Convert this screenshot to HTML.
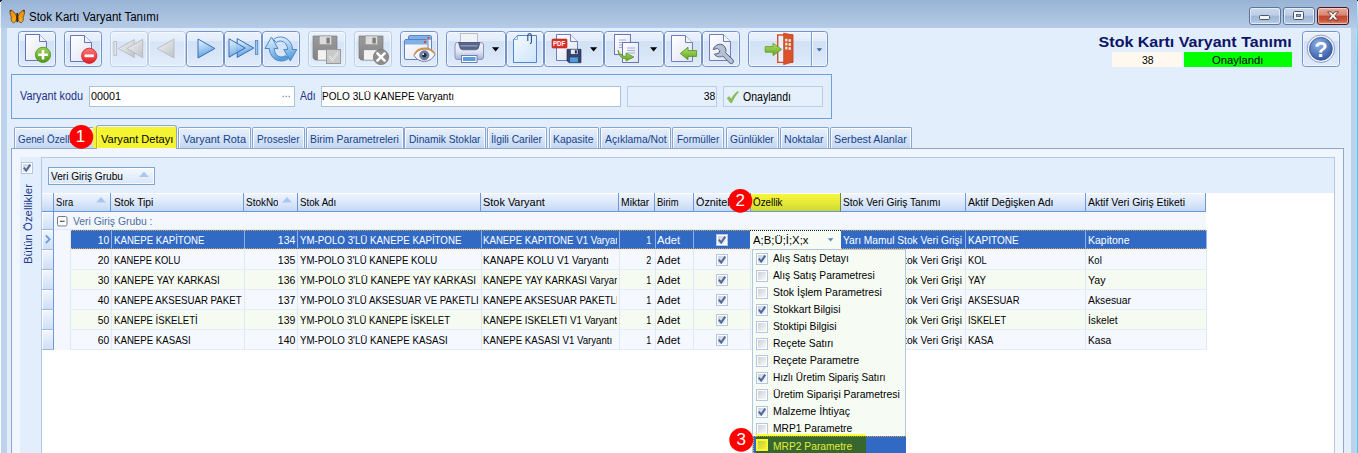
<!DOCTYPE html>
<html><head><meta charset="utf-8"><title>Stok Kartı Varyant Tanımı</title>
<style>
html,body{margin:0;padding:0}
body{width:1358px;height:453px;overflow:hidden;position:relative;background:#e3eefd;font-family:"Liberation Sans", sans-serif;font-size:11px}
div,svg{box-sizing:border-box}

.tb{position:absolute;top:31px;height:36px;border:1px solid #7494c9;border-radius:3.5px;background:linear-gradient(#eaf2fd 0,#e3edfb 26%,#d2e1f5 28%,#d6e4f7 60%,#e0ebfb 100%);box-shadow:inset 0 0 0 1px rgba(255,255,255,.55)}
.tb.dis{border-color:#bccde8;background:linear-gradient(#e9f1fd 0,#e2edfb 27%,#d6e4f7 29%,#dbe7f9 60%,#e2edfb 100%)}
.tab{position:absolute;top:127px;height:21px;border:1px solid #8ba3cf;border-bottom:none;border-radius:2px 2px 0 0;background:linear-gradient(#e6effb 0,#d9e6f8 45%,#c2d6f1 100%);box-shadow:inset 1px 1px 0 rgba(255,255,255,.8),inset -1px 0 0 rgba(255,255,255,.8)}
.hd{position:absolute;top:193px;height:19px;background:linear-gradient(#f0f5fd 0,#dde9fa 50%,#c3d8f5 100%);border-right:1px solid #6f98d8;border-bottom:1px solid #6c97d7;box-shadow:inset 0 1px 0 rgba(255,255,255,.9)}
.ind{position:absolute;left:42px;width:12px;background:linear-gradient(#f1f6fe,#cfdff5);border-right:1px solid #6f98d8;border-bottom:1px solid #9fb8de;box-shadow:inset 1px 1px 0 rgba(255,255,255,.9)}
.cb{position:absolute;width:12px;height:12px;border:1px solid #b5c6e2;background:linear-gradient(135deg,#c6cbd4,#f6f6f6 85%);box-shadow:inset 0 0 0 1px #fff}

</style></head><body>
<div style="position:absolute;left:0px;top:0px;width:1358px;height:28px;background:linear-gradient(#98b3d6,#b6cbe7)"></div>
<div style="position:absolute;left:0px;top:28px;width:7px;height:425px;background:linear-gradient(90deg,#fff 0,#fff 1px,#b7ceea 1px,#bdd3ec 2px,#bdd3ec 6px,#b7ceea 7px)"></div>
<div style="position:absolute;left:1351px;top:28px;width:7px;height:425px;background:linear-gradient(90deg,#bcd2ec 0,#bcd2ec 5px,#c3d3ec 5px,#c3d3ec 6px,#38cdf5 6px,#38cdf5 7px)"></div>
<div style="position:absolute;left:0px;top:2px;width:1px;height:26px;background:#e8eef6"></div>
<div style="position:absolute;left:1357px;top:0px;width:1px;height:60px;background:linear-gradient(#c0f4ff,#80dcf5 40%,#38cdf5)"></div>
<div style="position:absolute;left:1357px;top:0px;width:1px;height:1px;background:#123"></div>
<div style="position:absolute;left:0px;top:0px;width:2px;height:1px;background:#222"></div>
<div style="position:absolute;left:0px;top:1px;width:1px;height:1px;background:#222"></div>
<svg style="position:absolute;left:8.5px;top:8.5px" width="16.5" height="15.6" viewBox="0 0 18 17">
<defs><linearGradient id="bf" x1="0" y1="0" x2="0" y2="1"><stop offset="0" stop-color="#e98506"/><stop offset="1" stop-color="#fdb515"/></linearGradient></defs>
<path d="M8.3 8 C6.5 3.8 3.6 1.2 1.2 1.2 C0.7 4 1.4 7 2.7 8.7 C1.8 10.6 2.4 13.8 4.7 15 C6.8 14.8 8 12.6 8.3 10.6Z" fill="url(#bf)" stroke="#5a3212" stroke-width=".8"/>
<path d="M9.7 8 C11.5 3.8 14.4 1.2 16.8 1.2 C17.3 4 16.6 7 15.3 8.7 C16.2 10.6 15.6 13.8 13.3 15 C11.2 14.8 10 12.6 9.7 10.6Z" fill="url(#bf)" stroke="#5a3212" stroke-width=".8"/>
<path d="M1.2 1.2 L3 2 L1.6 3.4Z M16.8 1.2 L15 2 L16.4 3.4Z" fill="#4a2a12"/>
<path d="M9 5.2 L9 13.4" stroke="#3f2410" stroke-width="2" stroke-linecap="round"/>
</svg>
<div style="position:absolute;top:11px;line-height:1;white-space:pre;font-size:12px;color:#000;left:28.5px;transform-origin:0 0;transform:scaleX(0.9585);">Stok Kartı Varyant Tanımı</div>
<div style="position:absolute;left:1249px;top:7px;width:32px;height:18px;border:1px solid #5f7596;border-radius:3px;background:linear-gradient(#c9d9ee 0,#bccfe8 45%,#9fb8d8 50%,#a9c0de 80%,#c3d5ec 100%);box-shadow:inset 0 0 0 1px rgba(255,255,255,.55)"></div>
<div style="position:absolute;left:1283px;top:7px;width:32px;height:18px;border:1px solid #5f7596;border-radius:3px;background:linear-gradient(#c9d9ee 0,#bccfe8 45%,#9fb8d8 50%,#a9c0de 80%,#c3d5ec 100%);box-shadow:inset 0 0 0 1px rgba(255,255,255,.55)"></div>
<div style="position:absolute;left:1317px;top:7px;width:32px;height:18px;border:1px solid #4c1522;border-radius:3px;background:linear-gradient(#e9a99c 0,#d98674 45%,#c4452c 50%,#c85a3e 80%,#de9078 100%);box-shadow:inset 0 0 0 1px rgba(255,255,255,.45)"></div>
<svg style="position:absolute;left:1259px;top:15px" width="12" height="6" viewBox="0 0 12 6"><rect x=".5" y=".5" width="10" height="4" rx="1" fill="#f4f4f4" stroke="#4a5568" stroke-width="1"/></svg>
<svg style="position:absolute;left:1293px;top:11px" width="12" height="10" viewBox="0 0 12 10"><rect x=".5" y=".5" width="10" height="8" rx="1" fill="#f4f4f4" stroke="#4a5568" stroke-width="1"/><rect x="3.5" y="3.5" width="4" height="2" fill="#8aa3c6" stroke="#4a5568" stroke-width=".8"/></svg>
<svg style="position:absolute;left:1326px;top:10px" width="14" height="12" viewBox="0 0 14 12"><path d="M1.6 1.8 L5.2 1.8 L7 4.1 L8.8 1.8 L12.4 1.8 L8.9 5.8 L12.4 10 L8.8 10 L7 7.6 L5.2 10 L1.6 10 L5.1 5.8Z" fill="#f6f6f6" stroke="#5a3a38" stroke-width=".9" stroke-linejoin="round"/></svg>
<div class="tb" style="left:18px;width:38px"></div>
<div class="tb" style="left:64px;width:38px"></div>
<div class="tb dis" style="left:110px;width:38px"></div>
<div class="tb dis" style="left:148px;width:38px"></div>
<div class="tb" style="left:186px;width:38px"></div>
<div class="tb" style="left:224px;width:38px"></div>
<div class="tb" style="left:262px;width:38px"></div>
<div class="tb dis" style="left:308px;width:38px"></div>
<div class="tb dis" style="left:354px;width:38px"></div>
<div class="tb" style="left:400px;width:38px"></div>
<div class="tb" style="left:446px;width:60px"></div>
<div class="tb" style="left:506px;width:38px"></div>
<div class="tb" style="left:544px;width:60px"></div>
<div class="tb" style="left:604px;width:60px"></div>
<div class="tb" style="left:664px;width:38px"></div>
<div class="tb" style="left:702px;width:38px"></div>
<div class="tb" style="left:748px;width:80px"></div>
<div class="tb" style="left:1302px;width:38px"></div>
<div style="position:absolute;left:811px;top:32px;width:1px;height:34px;background:#7f9fd1"></div>
<div style="position:absolute;left:812px;top:32px;width:1px;height:34px;background:rgba(255,255,255,.6)"></div>
<svg width="0" height="0" style="position:absolute"><defs>
<linearGradient id="docg" x1="0" y1="0" x2="1" y2="1"><stop offset="0" stop-color="#ffffff"/><stop offset="1" stop-color="#dfe4f3"/></linearGradient>
<linearGradient id="grn" x1="0" y1="0" x2="0" y2="1"><stop offset="0" stop-color="#9ed35a"/><stop offset="1" stop-color="#4f9a1c"/></linearGradient>
<linearGradient id="red" x1="0" y1="0" x2="0" y2="1"><stop offset="0" stop-color="#ff7a7a"/><stop offset="1" stop-color="#e11b22"/></linearGradient>
<linearGradient id="gry" x1="0" y1="0" x2="1" y2="1"><stop offset="0" stop-color="#f4f4f4"/><stop offset="1" stop-color="#bfc3c7"/></linearGradient>
<linearGradient id="blu" x1="0" y1="0" x2=".3" y2="1"><stop offset="0" stop-color="#eaf5fd"/><stop offset=".5" stop-color="#a9d0f2"/><stop offset="1" stop-color="#5a9fdc"/></linearGradient>
<linearGradient id="flp" x1="0" y1="0" x2="0" y2="1"><stop offset="0" stop-color="#9a9a9a"/><stop offset="1" stop-color="#858585"/></linearGradient>
<linearGradient id="arr" x1="0" y1="0" x2="0" y2="1"><stop offset="0" stop-color="#b5e06a"/><stop offset="1" stop-color="#5fa522"/></linearGradient>
<linearGradient id="ltb" x1="0" y1="0" x2="1" y2="1"><stop offset="0" stop-color="#f4faff"/><stop offset="1" stop-color="#cfe4f9"/></linearGradient>
<linearGradient id="prn" x1="0" y1="0" x2="0" y2="1"><stop offset="0" stop-color="#f2f4fa"/><stop offset=".55" stop-color="#dfe4f2"/><stop offset="1" stop-color="#a3b1d8"/></linearGradient>
<radialGradient id="hlp" cx=".4" cy=".3" r=".8"><stop offset="0" stop-color="#8fb3e6"/><stop offset="1" stop-color="#2a4f9f"/></radialGradient>
</defs></svg>
<svg style="position:absolute;left:0px;top:28px" width="1358" height="42" viewBox="0 0 1358 42"><g transform="translate(0,-28)"><path d="M25.5 34.5 L39.5 34.5 L46.5 41.5 L46.5 60.5 L25.5 60.5Z" fill="url(#docg)" stroke="#6576bb" stroke-width="1"/><path d="M39.5 34.5 L39.5 41.5 L46.5 41.5" fill="#f2f4fb" stroke="#6576bb" stroke-width="1" stroke-linejoin="round"/><circle cx="43" cy="54.8" r="7.6" fill="url(#grn)" stroke="#4c8f1c" stroke-width=".8"/><path d="M43 50 V59.6 M38.2 54.8 H47.8" stroke="#fff" stroke-width="2.6"/><path d="M70.5 35.5 L84.5 35.5 L91.5 42.5 L91.5 61.5 L70.5 61.5Z" fill="url(#docg)" stroke="#6576bb" stroke-width="1"/><path d="M84.5 35.5 L84.5 42.5 L91.5 42.5" fill="#f2f4fb" stroke="#6576bb" stroke-width="1" stroke-linejoin="round"/><circle cx="89.2" cy="55.8" r="7.6" fill="url(#red)" stroke="#d11a22" stroke-width=".8"/><path d="M84.6 55.8 H93.8" stroke="#fff" stroke-width="2.8"/><rect x="114" y="41.5" width="2.4" height="14" fill="#e6e8ea" stroke="#b2b6bb" stroke-width=".8"/><path d="M118.5 48.5 L134.3 39.5 L134.3 57.5Z" fill="url(#gry)" stroke="#b2b6bb" stroke-width=".8"/><path d="M127 48.5 L142.7 39.2 L142.7 57.8Z" fill="url(#gry)" stroke="#b2b6bb" stroke-width=".8"/><path d="M157.2 48.5 L174 39 L174 58Z" fill="url(#gry)" stroke="#b2b6bb" stroke-width=".8"/><path d="M214.8 48.5 L198 39 L198 58Z" fill="url(#blu)" stroke="#3a6cb8" stroke-width="1" stroke-linejoin="round"/><path d="M253.8 48 L237.2 38.6 L237.2 57.4Z" fill="url(#blu)" stroke="#3a6cb8" stroke-width="1" stroke-linejoin="round"/><path d="M245.2 48 L229 38.8 L229 57.2Z" fill="url(#blu)" fill-opacity=".85" stroke="#3a6cb8" stroke-width="1" stroke-linejoin="round"/><rect x="255.3" y="40.5" width="2.5" height="14" fill="#9cc6ee" stroke="#3f78c0" stroke-width=".7"/><g stroke="#3f7fc4" stroke-width=".9" stroke-linejoin="round">
<path d="M265 48.5 L271.5 37 L278 48.5 L274.3 48.5 C274.3 53 277 56.8 281.5 57 C283 57 284.5 56.4 285.6 55.6 L288.3 58.6 C286.3 60.2 283.9 61 281.3 61 C274.5 61 269.6 55.5 269.3 48.5Z" fill="url(#blu)"/>
<path d="M296.8 49.5 L290.3 61 L283.8 49.5 L287.5 49.5 C287.5 45 284.8 41.2 280.3 41 C278.8 41 277.3 41.6 276.2 42.4 L273.5 39.4 C275.5 37.8 277.9 37 280.5 37 C287.3 37 292.2 42.5 292.5 49.5Z" fill="url(#blu)"/></g><path d="M313 36 H337 V60 H315 L313 58Z" fill="url(#flp)" stroke="#7c7c7c" stroke-width=".7"/><rect x="319.24" y="36" width="12.48" height="8.64" fill="#dcdcdc" stroke="#7c7c7c" stroke-width=".4"/><rect x="326.44" y="37.68" width="3.3600000000000003" height="5.76" fill="#7c7c7c"/><rect x="317.8" y="49.92" width="14.399999999999999" height="10.08" fill="#f2f2f2" stroke="#7c7c7c" stroke-width=".4"/><rect x="326.5" y="49.5" width="14" height="14" fill="#c9c9c9" stroke="#9a9a9a" stroke-width="1"/><path d="M329.5 56.5 L332.5 60 L338 52.5" fill="none" stroke="#fff" stroke-width="1.6"/><path d="M329.5 56.5 L332.5 60 L338 52.5" fill="none" stroke="#8a8a8a" stroke-width=".5"/><path d="M359 36 H383 V60 H361 L359 58Z" fill="url(#flp)" stroke="#7c7c7c" stroke-width=".7"/><rect x="365.24" y="36" width="12.48" height="8.64" fill="#dcdcdc" stroke="#7c7c7c" stroke-width=".4"/><rect x="372.44" y="37.68" width="3.3600000000000003" height="5.76" fill="#7c7c7c"/><rect x="363.8" y="49.92" width="14.399999999999999" height="10.08" fill="#f2f2f2" stroke="#7c7c7c" stroke-width=".4"/><circle cx="381" cy="57" r="7.6" fill="#8c8c8c" stroke="#777" stroke-width=".8"/><path d="M377.4 53.4 L384.6 60.6 M384.6 53.4 L377.4 60.6" stroke="#fff" stroke-width="2.6" stroke-linecap="round"/><rect x="408.5" y="35.5" width="23" height="20" rx="1.5" fill="#f4f6fb" stroke="#5f86c9" stroke-width="1"/><rect x="409" y="36" width="22" height="4" fill="#7fb0e6"/><rect x="427.5" y="37" width="2" height="2" fill="#e8452c"/>
<rect x="404.5" y="39.5" width="23.5" height="20" rx="1.5" fill="url(#docg)" stroke="#5f7fc0" stroke-width="1"/><rect x="405" y="40" width="22.5" height="4.5" fill="#7fb0e6"/><rect x="424" y="41" width="2.2" height="2.2" fill="#e8452c"/>
<path d="M414 55.5 C418 47.5 430 46.5 435 54.5 C430 63.5 419 63.5 414 55.5Z" fill="#f3f5fa" stroke="#5b6f9f" stroke-width=".9"/>
<path d="M414.3 54.6 C418 46.8 430 46.2 434.8 53.6" fill="none" stroke="#d8913c" stroke-width="1.6"/>
<circle cx="424.3" cy="55.3" r="4.6" fill="#6f7f9f" stroke="#4b5a7c" stroke-width=".6"/><circle cx="424.3" cy="55.3" r="2.2" fill="#1f2a44"/><circle cx="423.2" cy="54.2" r=".9" fill="#fff"/><rect x="460.5" y="33.5" width="17" height="12" fill="#f2f3f6" stroke="#b8bccb" stroke-width="1"/>
<path d="M455 45 Q455 42.5 457.5 42.5 L480.5 42.5 Q483.5 42.5 483.5 45 L483.5 57 Q483.5 59.5 481 59.5 L457.5 59.5 Q455 59.5 455 57Z" fill="url(#prn)" stroke="#8794c2" stroke-width="1"/>
<path d="M458.5 42.5 L459.5 46 Q459.8 49.8 463 49.8 L475.5 49.8 Q478.6 49.8 479 46 L480 42.5Z" fill="#56658c" stroke="#3f4c70" stroke-width=".6"/>
<rect x="460.5" y="45" width="17" height="1.6" fill="#8a96b6"/>
<rect x="461.5" y="55.5" width="15.5" height="7" fill="#fff" stroke="#6f7fb0" stroke-width="1"/><rect x="463" y="57" width="12.5" height="4" fill="#5b9fe0"/><path d="M492 47.2 L499.2 47.2 L495.6 51.4Z" fill="#000"/><path d="M513.5 39.5 L517.5 35.5 L536.5 35.5 L536.5 62.5 L513.5 62.5Z" fill="url(#ltb)" stroke="#4e86cf" stroke-width="1"/><path d="M513.8 39.5 L517.5 39.5 L517.5 35.8Z" fill="#fff" stroke="#4e86cf" stroke-width=".6"/><path d="M527.8 41 L527.8 35.6 Q527.8 33.6 529.6 33.6 Q531.4 33.6 531.4 35.6 L531.4 42 Q531.4 43.6 529.9 43.6" fill="none" stroke="#2c4f86" stroke-width="1.1"/><path d="M556.5 34.5 L570.5 34.5 L577.5 41.5 L577.5 60.5 L556.5 60.5Z" fill="url(#docg)" stroke="#6f7ebf" stroke-width="1"/><path d="M570.5 34.5 L570.5 41.5 L577.5 41.5" fill="#f2f4fb" stroke="#6f7ebf" stroke-width="1" stroke-linejoin="round"/><rect x="552" y="39" width="15" height="9" rx="1" fill="#d9312b" stroke="#b3201c" stroke-width=".6"/><path d="M567 49.3 H581 V62.699999999999996 H569 L567 60.699999999999996Z" fill="#37446e" stroke="#27314f" stroke-width=".7"/><rect x="570.64" y="49.3" width="7.28" height="4.824" fill="#e9edf5" stroke="#27314f" stroke-width=".4"/><rect x="574.84" y="50.238" width="1.9600000000000002" height="3.2159999999999997" fill="#27314f"/><rect x="569.8" y="57.071999999999996" width="8.4" height="5.628" fill="#4d9be2" stroke="#27314f" stroke-width=".4"/><path d="M590 47.2 L597.2 47.2 L593.6 51.4Z" fill="#000"/><rect x="614.5" y="34.5" width="16" height="20" fill="url(#docg)" stroke="#6a77b4" stroke-width="1"/><path d="M619 40 H626 M619 42.5 H626 M619 45 H626 M619 47.5 H626" stroke="#8f9bd0" stroke-width=".8"/><rect x="622.5" y="42.5" width="16" height="20" fill="url(#docg)" stroke="#6a77b4" stroke-width="1"/><path d="M627 48 H635 M627 50.5 H635 M627 53 H635" stroke="#8f9bd0" stroke-width=".8"/><path d="M618 50.2 C620 55 623 56.3 626 56.3 L626 53 L634 57 L626 61 L626 58.8 C621 58.8 618.5 55 618 50.2Z" fill="url(#arr)" stroke="#4d8f1f" stroke-width=".7" stroke-linejoin="round"/><path d="M650 47.2 L657.2 47.2 L653.6 51.4Z" fill="#000"/><path d="M671.5 35.5 L685.5 35.5 L692.5 42.5 L692.5 61.5 L671.5 61.5Z" fill="url(#docg)" stroke="#6f7ebf" stroke-width="1"/><path d="M685.5 35.5 L685.5 42.5 L692.5 42.5" fill="#f2f4fb" stroke="#6f7ebf" stroke-width="1" stroke-linejoin="round"/><path d="M680.3 53.5 L688 47.2 L688 50.6 L696.6 50.6 L696.6 56.4 L688 56.4 L688 59.8Z" fill="url(#arr)" stroke="#4d8f1f" stroke-width=".8" stroke-linejoin="round"/><path d="M709.5 34.5 L723.5 34.5 L730.5 41.5 L730.5 60.5 L709.5 60.5Z" fill="url(#docg)" stroke="#6f7ebf" stroke-width="1"/><path d="M723.5 34.5 L723.5 41.5 L730.5 41.5" fill="#f2f4fb" stroke="#6f7ebf" stroke-width="1" stroke-linejoin="round"/><path d="M722 44.6 C718.6 43.4 714.2 45.6 713.2 49.6 L717.6 48.4 L719.8 50.6 L718.8 53.4 L714.4 54.2 C716.2 57 720 57.6 722.8 56 L729.6 63 Q731.6 64.4 733 62.8 Q734.2 61.2 732.8 59.6 L725.6 52.8 C726.6 49.6 725.2 46 722 44.6Z" fill="#b4c0d4" stroke="#55617c" stroke-width="1" stroke-linejoin="round"/><path d="M777.7 35 L792.5 35 L792.5 62.4 L777.7 62.4Z" fill="#e9f0fb" stroke="#d6512b" stroke-width="1.4"/><path d="M783.6 33 L793 35 L793 62 L783.6 64.7Z" fill="#d9522c" stroke="#b8401f" stroke-width=".6"/><g fill="#e8f3e8"><rect x="785.2" y="38.8" width="2.2" height="2.6"/><rect x="788.6" y="39.2" width="2.2" height="2.6"/><rect x="785.2" y="42.8" width="2.2" height="2.6"/><rect x="788.6" y="43.2" width="2.2" height="2.6"/><rect x="785.2" y="46.8" width="2.2" height="2.6"/><rect x="788.6" y="47.2" width="2.2" height="2.6"/></g><path d="M781.8 49.4 L773 43.3 L773 46.6 L765.2 46.6 L765.2 52.2 L773 52.2 L773 55.6Z" fill="url(#arr)" stroke="#5a9a22" stroke-width=".8" stroke-linejoin="round"/><path d="M816.6 48.2 L822.2 48.2 L819.4 51.5Z" fill="#3f63a8"/><circle cx="1320.9" cy="48.8" r="13.7" fill="#f3f6fb" stroke="#8f9cc0" stroke-width="1"/><circle cx="1320.9" cy="48.8" r="11.4" fill="url(#hlp)" stroke="#34509a" stroke-width=".8"/></g></svg>
<div style="position:absolute;top:40px;line-height:1;white-space:pre;font-size:7.5px;color:#fff;font-weight:bold;left:553.3px;transform-origin:0 0;transform:scaleX(0.8133);">PDF</div>
<div style="position:absolute;top:39px;line-height:1;white-space:pre;font-size:22px;color:#fff;font-weight:bold;left:1314.3000000000002px;transform-origin:0 0;transform:scaleX(1.0000);">?</div>
<div style="position:absolute;top:34px;line-height:1;white-space:pre;font-size:15px;color:#0c1466;font-weight:bold;right:66.5px;transform-origin:100% 0;transform:scaleX(1.0686);">Stok Kartı Varyant Tanımı</div>
<div style="position:absolute;left:1112px;top:52px;width:70px;height:15px;background:#fff8ee"></div>
<div style="position:absolute;top:55px;line-height:1;white-space:pre;font-size:11px;color:#000;left:1141.5px;transform-origin:0 0;transform:scaleX(0.9469);">38</div>
<div style="position:absolute;left:1184px;top:52px;width:108px;height:15px;background:#00ff00"></div>
<div style="position:absolute;top:55px;line-height:1;white-space:pre;font-size:11px;color:#000;left:1211.9px;transform-origin:0 0;transform:scaleX(1.0228);">Onaylandı</div>
<div style="position:absolute;left:11px;top:74px;width:821px;height:45px;border:1px solid #6f9fdc;background:#e3eefd"></div>
<div style="position:absolute;top:90px;line-height:1;white-space:pre;font-size:12px;color:#1d2f86;left:20px;transform-origin:0 0;transform:scaleX(0.9022);">Varyant kodu</div>
<div style="position:absolute;left:89px;top:86px;width:206px;height:21px;border:1px solid #abc1e0;background:#fff"></div>
<div style="position:absolute;top:91px;line-height:1;white-space:pre;font-size:11px;color:#000;left:90.75px;transform-origin:0 0;transform:scaleX(0.9806);">00001</div>
<svg style="position:absolute;left:282px;top:95px" width="9" height="3" viewBox="0 0 9 3"><rect x=".6" y=".8" width="1.3" height="1.3" fill="#6d8cc0"/><rect x="3.6" y=".8" width="1.3" height="1.3" fill="#6d8cc0"/><rect x="6.6" y=".8" width="1.3" height="1.3" fill="#6d8cc0"/></svg>
<div style="position:absolute;top:90px;line-height:1;white-space:pre;font-size:12px;color:#1d2f86;left:300.4px;transform-origin:0 0;transform:scaleX(0.8659);">Adı</div>
<div style="position:absolute;left:321px;top:86px;width:300px;height:21px;border:1px solid #abc1e0;background:#fff"></div>
<div style="position:absolute;top:91px;line-height:1;white-space:pre;font-size:11px;color:#000;left:322.4px;transform-origin:0 0;transform:scaleX(0.9122);">POLO 3LÜ KANEPE Varyantı</div>
<div style="position:absolute;left:627px;top:86px;width:90px;height:21px;border:1px solid #b9cce8;background:#e6f0fd"></div>
<div style="position:absolute;top:91px;line-height:1;white-space:pre;font-size:11px;color:#000;right:643.25px;transform-origin:100% 0;transform:scaleX(0.9469);">38</div>
<div style="position:absolute;left:723px;top:86px;width:100px;height:21px;border:1px solid #b9cce8;background:#e6f0fd"></div>
<svg style="position:absolute;left:726px;top:90px" width="13" height="14" viewBox="0 0 13 14"><path d="M1.2 8.2 L3.2 6.6 L5.2 9.4 C6.6 6.4 9 3.2 11.8 1.4 L12.4 2.2 C9.8 4.8 7.4 8.6 5.8 12.6 L4.6 12.8Z" fill="#8cc152" stroke="#6da334" stroke-width=".5"/></svg>
<div style="position:absolute;top:91px;line-height:1;white-space:pre;font-size:12px;color:#000;left:742.5px;transform-origin:0 0;transform:scaleX(0.8775);">Onaylandı</div>
<div style="position:absolute;left:11px;top:148px;width:1333px;height:320px;border:1px solid #8fa7cd;background:#f1f6fe"></div>
<div class="tab" style="left:14px;width:81px"></div>
<div style="position:absolute;left:16px;top:133.5px;width:78px;height:14px;overflow:hidden"><div style="position:absolute;top:0px;line-height:1;white-space:pre;font-size:11px;color:#15428b;left:2.1499999999999986px;transform-origin:0 0;transform:scaleX(0.8951);">Genel Özellikler</div></div>
<div class="tab" style="left:178px;width:73px"></div>
<div style="position:absolute;top:133.5px;line-height:1;white-space:pre;font-size:11px;color:#15428b;left:182.65px;transform-origin:0 0;transform:scaleX(0.9938);">Varyant Rota</div>
<div class="tab" style="left:252px;width:53px"></div>
<div style="position:absolute;top:133.5px;line-height:1;white-space:pre;font-size:11px;color:#15428b;left:256.9px;transform-origin:0 0;transform:scaleX(0.9146);">Prosesler</div>
<div class="tab" style="left:306px;width:98px"></div>
<div style="position:absolute;top:133.5px;line-height:1;white-space:pre;font-size:11px;color:#15428b;left:310.15px;transform-origin:0 0;transform:scaleX(0.9427);">Birim Parametreleri</div>
<div class="tab" style="left:404px;width:82px"></div>
<div style="position:absolute;top:133.5px;line-height:1;white-space:pre;font-size:11px;color:#15428b;left:408.9px;transform-origin:0 0;transform:scaleX(0.9282);">Dinamik Stoklar</div>
<div class="tab" style="left:487px;width:60px"></div>
<div style="position:absolute;top:133.5px;line-height:1;white-space:pre;font-size:11px;color:#15428b;left:491.4px;transform-origin:0 0;transform:scaleX(0.9374);">İlgili Cariler</div>
<div class="tab" style="left:549px;width:50px"></div>
<div style="position:absolute;top:133.5px;line-height:1;white-space:pre;font-size:11px;color:#15428b;left:553.4px;transform-origin:0 0;transform:scaleX(0.9460);">Kapasite</div>
<div class="tab" style="left:600px;width:71px"></div>
<div style="position:absolute;top:133.5px;line-height:1;white-space:pre;font-size:11px;color:#15428b;left:604.65px;transform-origin:0 0;transform:scaleX(0.9439);">Açıklama/Not</div>
<div class="tab" style="left:672px;width:52px"></div>
<div style="position:absolute;top:133.5px;line-height:1;white-space:pre;font-size:11px;color:#15428b;left:676.9px;transform-origin:0 0;transform:scaleX(0.9095);">Formüller</div>
<div class="tab" style="left:726px;width:53px"></div>
<div style="position:absolute;top:133.5px;line-height:1;white-space:pre;font-size:11px;color:#15428b;left:729.9px;transform-origin:0 0;transform:scaleX(0.9293);">Günlükler</div>
<div class="tab" style="left:780px;width:49px"></div>
<div style="position:absolute;top:133.5px;line-height:1;white-space:pre;font-size:11px;color:#15428b;left:784.15px;transform-origin:0 0;transform:scaleX(0.9641);">Noktalar</div>
<div class="tab" style="left:830px;width:82px"></div>
<div style="position:absolute;top:133.5px;line-height:1;white-space:pre;font-size:11px;color:#15428b;left:834.15px;transform-origin:0 0;transform:scaleX(0.9751);">Serbest Alanlar</div>
<div style="position:absolute;left:96px;top:125px;width:81px;height:24px;border:1px solid #8fa7cd;border-bottom:none;border-radius:3px 3px 0 0;background:#f1f6fe"></div>
<div style="position:absolute;left:93px;top:127px;width:83px;height:21px;background:#f4f431"></div>
<div style="position:absolute;left:96px;top:127px;width:1px;height:21px;background:#b9b930"></div>
<div style="position:absolute;left:97px;top:127px;width:1px;height:21px;background:#ffff55"></div>
<div style="position:absolute;top:133.5px;line-height:1;white-space:pre;font-size:11px;color:#000;left:100.75px;transform-origin:0 0;transform:scaleX(1.0041);">Varyant Detayı</div>
<div style="position:absolute;left:20px;top:157px;width:21px;height:300px;background:#e3eefc"></div>
<div class="cb" style="left:21px;top:162px"></div>
<svg style="position:absolute;left:21px;top:162px" width="12" height="12" viewBox="0 0 12 12"><path d="M2.8 5.6 L5.2 8.6 L9.2 2.6" fill="none" stroke="#4a6a9c" stroke-width="2"/></svg>
<div style="position:absolute;left:23px;top:264px;line-height:1;white-space:pre;font-size:11px;color:#1e3a8a;transform-origin:0 0;transform:rotate(-90deg) scaleX(1.0383);">Bütün Özellikler</div>
<div style="position:absolute;left:41px;top:157px;width:1294px;height:300px;border:1px solid #b4c8e6;background:#fff"></div>
<div style="position:absolute;left:42px;top:158px;width:1292px;height:35px;background:#e3eefd"></div>
<div style="position:absolute;left:48px;top:167px;width:107px;height:18px;border:1px solid #7fa3d2;background:linear-gradient(#f4f8fe,#d9e6f8);box-shadow:inset 0 0 0 1px rgba(255,255,255,.7)"></div>
<div style="position:absolute;top:171px;line-height:1;white-space:pre;font-size:11px;color:#000;left:51.25px;transform-origin:0 0;transform:scaleX(0.9201);">Veri Giriş Grubu</div>
<svg style="position:absolute;left:138px;top:171px" width="12" height="7" viewBox="0 0 12 7"><path d="M1 6 L6 .8 L11 6Z" fill="#a9c8f0"/></svg>
<div class="hd" style="left:42px;width:11.5px;"></div>
<div class="hd" style="left:53.5px;width:57.5px;"></div>
<div style="position:absolute;top:197px;line-height:1;white-space:pre;font-size:11px;color:#000;left:55.5px;transform-origin:0 0;transform:scaleX(0.8520);">Sıra</div>
<div class="hd" style="left:111px;width:133px;"></div>
<div style="position:absolute;top:197px;line-height:1;white-space:pre;font-size:11px;color:#000;left:113.75px;transform-origin:0 0;transform:scaleX(0.9304);">Stok Tipi</div>
<div class="hd" style="left:244px;width:53.5px;"></div>
<div style="position:absolute;left:245px;top:197px;width:33px;height:14px;overflow:hidden"><div style="position:absolute;top:0px;line-height:1;white-space:pre;font-size:11px;color:#000;left:1.25px;transform-origin:0 0;transform:scaleX(0.9036);">StokNo</div></div>
<div class="hd" style="left:297.5px;width:183.5px;"></div>
<div style="position:absolute;top:197px;line-height:1;white-space:pre;font-size:11px;color:#000;left:300px;transform-origin:0 0;transform:scaleX(0.8845);">Stok Adı</div>
<div class="hd" style="left:481px;width:138px;"></div>
<div style="position:absolute;top:197px;line-height:1;white-space:pre;font-size:11px;color:#000;left:482.75px;transform-origin:0 0;transform:scaleX(0.9932);">Stok Varyant</div>
<div class="hd" style="left:619px;width:36px;"></div>
<div style="position:absolute;top:197px;line-height:1;white-space:pre;font-size:11px;color:#000;left:620.75px;transform-origin:0 0;transform:scaleX(0.9431);">Miktar</div>
<div class="hd" style="left:655px;width:38.5px;"></div>
<div style="position:absolute;top:197px;line-height:1;white-space:pre;font-size:11px;color:#000;left:656.5px;transform-origin:0 0;transform:scaleX(0.8579);">Birim</div>
<div class="hd" style="left:693.5px;width:57.0px;"></div>
<div style="position:absolute;left:694.5px;top:197px;width:54.0px;height:14px;overflow:hidden"><div style="position:absolute;top:0px;line-height:1;white-space:pre;font-size:11px;color:#000;left:1.0px;transform-origin:0 0;transform:scaleX(0.9837);">Öznitelik</div></div>
<div class="hd" style="left:750.5px;width:90.0px;background:linear-gradient(#f8f83a,#e4e838 60%,#ccd634);border-right-color:#6f8c3c;"></div>
<div style="position:absolute;top:197px;line-height:1;white-space:pre;font-size:11px;color:#000;left:753px;transform-origin:0 0;transform:scaleX(0.8935);">Özellik</div>
<div class="hd" style="left:840.5px;width:125.0px;"></div>
<div style="position:absolute;top:197px;line-height:1;white-space:pre;font-size:11px;color:#000;left:843px;transform-origin:0 0;transform:scaleX(0.9236);">Stok Veri Giriş Tanımı</div>
<div class="hd" style="left:965.5px;width:120.0px;"></div>
<div style="position:absolute;top:197px;line-height:1;white-space:pre;font-size:11px;color:#000;left:967.5px;transform-origin:0 0;transform:scaleX(0.9576);">Aktif Değişken Adı</div>
<div class="hd" style="left:1085.5px;width:120.5px;"></div>
<div style="position:absolute;top:197px;line-height:1;white-space:pre;font-size:11px;color:#000;left:1087.8px;transform-origin:0 0;transform:scaleX(0.9503);">Aktif Veri Giriş Etiketi</div>
<svg style="position:absolute;left:95px;top:196px" width="12" height="8" viewBox="0 0 12 8"><path d="M1 6.5 L6 1 L11 6.5Z" fill="#a9c8f0"/></svg>
<svg style="position:absolute;left:281px;top:196px" width="12" height="8" viewBox="0 0 12 8"><path d="M1 6.5 L6 1 L11 6.5Z" fill="#a9c8f0"/></svg>
<div style="position:absolute;left:42px;top:212px;width:1164px;height:18px;background:#f4f8fe;border-bottom:1px solid #dfe8f6"></div>
<div class="ind" style="top:212px;height:18px"></div>
<svg style="position:absolute;left:57px;top:216px" width="11" height="11" viewBox="0 0 11 11"><rect x=".5" y=".5" width="9.5" height="9.5" rx="1.5" fill="#fff" stroke="#707c8e" stroke-width="1"/><path d="M2.8 5.25 H7.7" stroke="#333" stroke-width="1"/></svg>
<div style="position:absolute;top:216px;line-height:1;white-space:pre;font-size:11px;color:#4f6ea1;left:72.5px;transform-origin:0 0;transform:scaleX(0.9424);">Veri Giriş Grubu :</div>
<div style="position:absolute;left:54px;top:230px;width:17px;height:120px;background:#f4f8fe;border-right:1px solid #dfe8f6"></div>
<div style="position:absolute;left:71px;top:230px;width:1135px;height:20px;background:#316ac5;border-bottom:1px solid #e6edf8"></div>
<div class="ind" style="top:230px;height:20px"></div>
<div style="position:absolute;left:111px;top:230px;width:1px;height:19px;background:#8fb0ea"></div>
<div style="position:absolute;left:244px;top:230px;width:1px;height:19px;background:#8fb0ea"></div>
<div style="position:absolute;left:297px;top:230px;width:1px;height:19px;background:#8fb0ea"></div>
<div style="position:absolute;left:481px;top:230px;width:1px;height:19px;background:#8fb0ea"></div>
<div style="position:absolute;left:619px;top:230px;width:1px;height:19px;background:#8fb0ea"></div>
<div style="position:absolute;left:655px;top:230px;width:1px;height:19px;background:#8fb0ea"></div>
<div style="position:absolute;left:693px;top:230px;width:1px;height:19px;background:#8fb0ea"></div>
<div style="position:absolute;left:750px;top:230px;width:1px;height:19px;background:#8fb0ea"></div>
<div style="position:absolute;left:840px;top:230px;width:1px;height:19px;background:#8fb0ea"></div>
<div style="position:absolute;left:965px;top:230px;width:1px;height:19px;background:#8fb0ea"></div>
<div style="position:absolute;left:1085px;top:230px;width:1px;height:19px;background:#8fb0ea"></div>
<div style="position:absolute;left:1206px;top:230px;width:1px;height:19px;background:#8fb0ea"></div>
<div style="position:absolute;top:235px;line-height:1;white-space:pre;font-size:11px;color:#fff;right:1249.25px;transform-origin:100% 0;transform:scaleX(0.9388);">10</div>
<div style="position:absolute;top:235px;line-height:1;white-space:pre;font-size:11px;color:#fff;left:113.75px;transform-origin:0 0;transform:scaleX(0.8777);">KANEPE KAPİTONE</div>
<div style="position:absolute;top:235px;line-height:1;white-space:pre;font-size:11px;color:#fff;right:1063px;transform-origin:100% 0;transform:scaleX(0.9532);">134</div>
<div style="position:absolute;top:235px;line-height:1;white-space:pre;font-size:11px;color:#fff;left:300px;transform-origin:0 0;transform:scaleX(0.8862);">YM-POLO 3&#x27;LÜ KANEPE KAPİTONE</div>
<div style="position:absolute;left:482px;top:235px;width:135px;height:14px;overflow:hidden"><div style="position:absolute;top:0px;line-height:1;white-space:pre;font-size:11px;color:#fff;left:0.75px;transform-origin:0 0;transform:scaleX(0.8780);">KANEPE KAPİTONE V1 Varyantı</div></div>
<div style="position:absolute;top:235px;line-height:1;white-space:pre;font-size:11px;color:#fff;right:706.5px;transform-origin:100% 0;transform:scaleX(0.8163);">1</div>
<div style="position:absolute;top:235px;line-height:1;white-space:pre;font-size:11px;color:#fff;left:657px;transform-origin:0 0;transform:scaleX(1.0159);">Adet</div>
<div class="cb" style="left:716px;top:234px"></div>
<svg style="position:absolute;left:716px;top:234px" width="12" height="12" viewBox="0 0 12 12"><path d="M2.8 5.6 L5.2 8.6 L9.2 2.6" fill="none" stroke="#4a6a9c" stroke-width="2"/></svg>
<div style="position:absolute;left:842px;top:235px;width:122px;height:14px;overflow:hidden"><div style="position:absolute;top:0px;line-height:1;white-space:pre;font-size:11px;color:#fff;left:1px;transform-origin:0 0;transform:scaleX(0.9284);">Yarı Mamul Stok Veri Grişi</div></div>
<div style="position:absolute;top:235px;line-height:1;white-space:pre;font-size:11px;color:#fff;left:968px;transform-origin:0 0;transform:scaleX(0.9163);">KAPITONE</div>
<div style="position:absolute;top:235px;line-height:1;white-space:pre;font-size:11px;color:#fff;left:1087.8px;transform-origin:0 0;transform:scaleX(0.9554);">Kapitone</div>
<div style="position:absolute;left:71px;top:250px;width:1135px;height:20px;background:#f5f9ff;border-bottom:1px solid #e6edf8"></div>
<div class="ind" style="top:250px;height:20px"></div>
<div style="position:absolute;left:111px;top:250px;width:1px;height:20px;background:#dfe8f6"></div>
<div style="position:absolute;left:244px;top:250px;width:1px;height:20px;background:#dfe8f6"></div>
<div style="position:absolute;left:297px;top:250px;width:1px;height:20px;background:#dfe8f6"></div>
<div style="position:absolute;left:481px;top:250px;width:1px;height:20px;background:#dfe8f6"></div>
<div style="position:absolute;left:619px;top:250px;width:1px;height:20px;background:#dfe8f6"></div>
<div style="position:absolute;left:655px;top:250px;width:1px;height:20px;background:#dfe8f6"></div>
<div style="position:absolute;left:693px;top:250px;width:1px;height:20px;background:#dfe8f6"></div>
<div style="position:absolute;left:750px;top:250px;width:1px;height:20px;background:#dfe8f6"></div>
<div style="position:absolute;left:840px;top:250px;width:1px;height:20px;background:#dfe8f6"></div>
<div style="position:absolute;left:965px;top:250px;width:1px;height:20px;background:#dfe8f6"></div>
<div style="position:absolute;left:1085px;top:250px;width:1px;height:20px;background:#dfe8f6"></div>
<div style="position:absolute;left:1206px;top:250px;width:1px;height:20px;background:#dfe8f6"></div>
<div style="position:absolute;top:255px;line-height:1;white-space:pre;font-size:11px;color:#000;right:1249.25px;transform-origin:100% 0;transform:scaleX(0.9388);">20</div>
<div style="position:absolute;top:255px;line-height:1;white-space:pre;font-size:11px;color:#000;left:113.75px;transform-origin:0 0;transform:scaleX(0.8533);">KANEPE KOLU</div>
<div style="position:absolute;top:255px;line-height:1;white-space:pre;font-size:11px;color:#000;right:1063px;transform-origin:100% 0;transform:scaleX(0.9532);">135</div>
<div style="position:absolute;top:255px;line-height:1;white-space:pre;font-size:11px;color:#000;left:300px;transform-origin:0 0;transform:scaleX(0.8755);">YM-POLO 3&#x27;LÜ KANEPE KOLU</div>
<div style="position:absolute;top:255px;line-height:1;white-space:pre;font-size:11px;color:#000;left:482.75px;transform-origin:0 0;transform:scaleX(0.9155);">KANAPE KOLU V1 Varyantı</div>
<div style="position:absolute;top:255px;line-height:1;white-space:pre;font-size:11px;color:#000;right:706.5px;transform-origin:100% 0;transform:scaleX(0.8163);">2</div>
<div style="position:absolute;top:255px;line-height:1;white-space:pre;font-size:11px;color:#000;left:657px;transform-origin:0 0;transform:scaleX(1.0159);">Adet</div>
<div class="cb" style="left:716px;top:254px"></div>
<svg style="position:absolute;left:716px;top:254px" width="12" height="12" viewBox="0 0 12 12"><path d="M2.8 5.6 L5.2 8.6 L9.2 2.6" fill="none" stroke="#4a6a9c" stroke-width="2"/></svg>
<div style="position:absolute;left:842px;top:255px;width:122px;height:14px;overflow:hidden"><div style="position:absolute;top:0px;line-height:1;white-space:pre;font-size:11px;color:#000;left:1px;transform-origin:0 0;transform:scaleX(0.9284);">Yarı Mamul Stok Veri Grişi</div></div>
<div style="position:absolute;top:255px;line-height:1;white-space:pre;font-size:11px;color:#000;left:968px;transform-origin:0 0;transform:scaleX(0.8494);">KOL</div>
<div style="position:absolute;top:255px;line-height:1;white-space:pre;font-size:11px;color:#000;left:1087.8px;transform-origin:0 0;transform:scaleX(0.8676);">Kol</div>
<div style="position:absolute;left:71px;top:270px;width:1135px;height:20px;background:#f6fbf2;border-bottom:1px solid #e6edf8"></div>
<div class="ind" style="top:270px;height:20px"></div>
<div style="position:absolute;left:111px;top:270px;width:1px;height:20px;background:#dfe8f6"></div>
<div style="position:absolute;left:244px;top:270px;width:1px;height:20px;background:#dfe8f6"></div>
<div style="position:absolute;left:297px;top:270px;width:1px;height:20px;background:#dfe8f6"></div>
<div style="position:absolute;left:481px;top:270px;width:1px;height:20px;background:#dfe8f6"></div>
<div style="position:absolute;left:619px;top:270px;width:1px;height:20px;background:#dfe8f6"></div>
<div style="position:absolute;left:655px;top:270px;width:1px;height:20px;background:#dfe8f6"></div>
<div style="position:absolute;left:693px;top:270px;width:1px;height:20px;background:#dfe8f6"></div>
<div style="position:absolute;left:750px;top:270px;width:1px;height:20px;background:#dfe8f6"></div>
<div style="position:absolute;left:840px;top:270px;width:1px;height:20px;background:#dfe8f6"></div>
<div style="position:absolute;left:965px;top:270px;width:1px;height:20px;background:#dfe8f6"></div>
<div style="position:absolute;left:1085px;top:270px;width:1px;height:20px;background:#dfe8f6"></div>
<div style="position:absolute;left:1206px;top:270px;width:1px;height:20px;background:#dfe8f6"></div>
<div style="position:absolute;top:275px;line-height:1;white-space:pre;font-size:11px;color:#000;right:1249.25px;transform-origin:100% 0;transform:scaleX(0.9388);">30</div>
<div style="position:absolute;top:275px;line-height:1;white-space:pre;font-size:11px;color:#000;left:113.75px;transform-origin:0 0;transform:scaleX(0.8931);">KANEPE YAY KARKASI</div>
<div style="position:absolute;top:275px;line-height:1;white-space:pre;font-size:11px;color:#000;right:1063px;transform-origin:100% 0;transform:scaleX(0.9532);">136</div>
<div style="position:absolute;top:275px;line-height:1;white-space:pre;font-size:11px;color:#000;left:300px;transform-origin:0 0;transform:scaleX(0.8910);">YM-POLO 3&#x27;LÜ KANEPE YAY KARKASI</div>
<div style="position:absolute;left:482px;top:275px;width:135px;height:14px;overflow:hidden"><div style="position:absolute;top:0px;line-height:1;white-space:pre;font-size:11px;color:#000;left:0.75px;transform-origin:0 0;transform:scaleX(0.8780);">KANEPE YAY KARKASI Varyantı</div></div>
<div style="position:absolute;top:275px;line-height:1;white-space:pre;font-size:11px;color:#000;right:706.5px;transform-origin:100% 0;transform:scaleX(0.8163);">1</div>
<div style="position:absolute;top:275px;line-height:1;white-space:pre;font-size:11px;color:#000;left:657px;transform-origin:0 0;transform:scaleX(1.0159);">Adet</div>
<div class="cb" style="left:716px;top:274px"></div>
<svg style="position:absolute;left:716px;top:274px" width="12" height="12" viewBox="0 0 12 12"><path d="M2.8 5.6 L5.2 8.6 L9.2 2.6" fill="none" stroke="#4a6a9c" stroke-width="2"/></svg>
<div style="position:absolute;left:842px;top:275px;width:122px;height:14px;overflow:hidden"><div style="position:absolute;top:0px;line-height:1;white-space:pre;font-size:11px;color:#000;left:1px;transform-origin:0 0;transform:scaleX(0.9284);">Yarı Mamul Stok Veri Grişi</div></div>
<div style="position:absolute;top:275px;line-height:1;white-space:pre;font-size:11px;color:#000;left:968px;transform-origin:0 0;transform:scaleX(0.8828);">YAY</div>
<div style="position:absolute;top:275px;line-height:1;white-space:pre;font-size:11px;color:#000;left:1087.8px;transform-origin:0 0;transform:scaleX(0.9702);">Yay</div>
<div style="position:absolute;left:71px;top:290px;width:1135px;height:20px;background:#f5f9ff;border-bottom:1px solid #e6edf8"></div>
<div class="ind" style="top:290px;height:20px"></div>
<div style="position:absolute;left:111px;top:290px;width:1px;height:20px;background:#dfe8f6"></div>
<div style="position:absolute;left:244px;top:290px;width:1px;height:20px;background:#dfe8f6"></div>
<div style="position:absolute;left:297px;top:290px;width:1px;height:20px;background:#dfe8f6"></div>
<div style="position:absolute;left:481px;top:290px;width:1px;height:20px;background:#dfe8f6"></div>
<div style="position:absolute;left:619px;top:290px;width:1px;height:20px;background:#dfe8f6"></div>
<div style="position:absolute;left:655px;top:290px;width:1px;height:20px;background:#dfe8f6"></div>
<div style="position:absolute;left:693px;top:290px;width:1px;height:20px;background:#dfe8f6"></div>
<div style="position:absolute;left:750px;top:290px;width:1px;height:20px;background:#dfe8f6"></div>
<div style="position:absolute;left:840px;top:290px;width:1px;height:20px;background:#dfe8f6"></div>
<div style="position:absolute;left:965px;top:290px;width:1px;height:20px;background:#dfe8f6"></div>
<div style="position:absolute;left:1085px;top:290px;width:1px;height:20px;background:#dfe8f6"></div>
<div style="position:absolute;left:1206px;top:290px;width:1px;height:20px;background:#dfe8f6"></div>
<div style="position:absolute;top:295px;line-height:1;white-space:pre;font-size:11px;color:#000;right:1249.25px;transform-origin:100% 0;transform:scaleX(0.9388);">40</div>
<div style="position:absolute;left:112px;top:295px;width:130px;height:14px;overflow:hidden"><div style="position:absolute;top:0px;line-height:1;white-space:pre;font-size:11px;color:#000;left:1.75px;transform-origin:0 0;transform:scaleX(0.8780);">KANEPE AKSESUAR PAKETİ</div></div>
<div style="position:absolute;top:295px;line-height:1;white-space:pre;font-size:11px;color:#000;right:1063px;transform-origin:100% 0;transform:scaleX(0.9532);">137</div>
<div style="position:absolute;left:298px;top:295px;width:181.5px;height:14px;overflow:hidden"><div style="position:absolute;top:0px;line-height:1;white-space:pre;font-size:11px;color:#000;left:2px;transform-origin:0 0;transform:scaleX(0.8780);">YM-POLO 3&#x27;LÜ AKSESUAR VE PAKETLİ</div></div>
<div style="position:absolute;left:482px;top:295px;width:135px;height:14px;overflow:hidden"><div style="position:absolute;top:0px;line-height:1;white-space:pre;font-size:11px;color:#000;left:0.75px;transform-origin:0 0;transform:scaleX(0.8780);">KANEPE AKSESUAR PAKETLİ</div></div>
<div style="position:absolute;top:295px;line-height:1;white-space:pre;font-size:11px;color:#000;right:706.5px;transform-origin:100% 0;transform:scaleX(0.8163);">1</div>
<div style="position:absolute;top:295px;line-height:1;white-space:pre;font-size:11px;color:#000;left:657px;transform-origin:0 0;transform:scaleX(1.0159);">Adet</div>
<div class="cb" style="left:716px;top:294px"></div>
<svg style="position:absolute;left:716px;top:294px" width="12" height="12" viewBox="0 0 12 12"><path d="M2.8 5.6 L5.2 8.6 L9.2 2.6" fill="none" stroke="#4a6a9c" stroke-width="2"/></svg>
<div style="position:absolute;left:842px;top:295px;width:122px;height:14px;overflow:hidden"><div style="position:absolute;top:0px;line-height:1;white-space:pre;font-size:11px;color:#000;left:1px;transform-origin:0 0;transform:scaleX(0.9284);">Yarı Mamul Stok Veri Grişi</div></div>
<div style="position:absolute;top:295px;line-height:1;white-space:pre;font-size:11px;color:#000;left:968px;transform-origin:0 0;transform:scaleX(0.8595);">AKSESUAR</div>
<div style="position:absolute;top:295px;line-height:1;white-space:pre;font-size:11px;color:#000;left:1087.8px;transform-origin:0 0;transform:scaleX(0.9376);">Aksesuar</div>
<div style="position:absolute;left:71px;top:310px;width:1135px;height:20px;background:#f6fbf2;border-bottom:1px solid #e6edf8"></div>
<div class="ind" style="top:310px;height:20px"></div>
<div style="position:absolute;left:111px;top:310px;width:1px;height:20px;background:#dfe8f6"></div>
<div style="position:absolute;left:244px;top:310px;width:1px;height:20px;background:#dfe8f6"></div>
<div style="position:absolute;left:297px;top:310px;width:1px;height:20px;background:#dfe8f6"></div>
<div style="position:absolute;left:481px;top:310px;width:1px;height:20px;background:#dfe8f6"></div>
<div style="position:absolute;left:619px;top:310px;width:1px;height:20px;background:#dfe8f6"></div>
<div style="position:absolute;left:655px;top:310px;width:1px;height:20px;background:#dfe8f6"></div>
<div style="position:absolute;left:693px;top:310px;width:1px;height:20px;background:#dfe8f6"></div>
<div style="position:absolute;left:750px;top:310px;width:1px;height:20px;background:#dfe8f6"></div>
<div style="position:absolute;left:840px;top:310px;width:1px;height:20px;background:#dfe8f6"></div>
<div style="position:absolute;left:965px;top:310px;width:1px;height:20px;background:#dfe8f6"></div>
<div style="position:absolute;left:1085px;top:310px;width:1px;height:20px;background:#dfe8f6"></div>
<div style="position:absolute;left:1206px;top:310px;width:1px;height:20px;background:#dfe8f6"></div>
<div style="position:absolute;top:315px;line-height:1;white-space:pre;font-size:11px;color:#000;right:1249.25px;transform-origin:100% 0;transform:scaleX(0.9388);">50</div>
<div style="position:absolute;top:315px;line-height:1;white-space:pre;font-size:11px;color:#000;left:113.75px;transform-origin:0 0;transform:scaleX(0.8725);">KANEPE İSKELETİ</div>
<div style="position:absolute;top:315px;line-height:1;white-space:pre;font-size:11px;color:#000;right:1063px;transform-origin:100% 0;transform:scaleX(0.9532);">139</div>
<div style="position:absolute;top:315px;line-height:1;white-space:pre;font-size:11px;color:#000;left:300px;transform-origin:0 0;transform:scaleX(0.8719);">YM-POLO 3&#x27;LÜ KANEPE İSKELET</div>
<div style="position:absolute;left:482px;top:315px;width:135px;height:14px;overflow:hidden"><div style="position:absolute;top:0px;line-height:1;white-space:pre;font-size:11px;color:#000;left:0.75px;transform-origin:0 0;transform:scaleX(0.8780);">KANEPE İSKELETİ V1 Varyantı</div></div>
<div style="position:absolute;top:315px;line-height:1;white-space:pre;font-size:11px;color:#000;right:706.5px;transform-origin:100% 0;transform:scaleX(0.8163);">1</div>
<div style="position:absolute;top:315px;line-height:1;white-space:pre;font-size:11px;color:#000;left:657px;transform-origin:0 0;transform:scaleX(1.0159);">Adet</div>
<div class="cb" style="left:716px;top:314px"></div>
<svg style="position:absolute;left:716px;top:314px" width="12" height="12" viewBox="0 0 12 12"><path d="M2.8 5.6 L5.2 8.6 L9.2 2.6" fill="none" stroke="#4a6a9c" stroke-width="2"/></svg>
<div style="position:absolute;left:842px;top:315px;width:122px;height:14px;overflow:hidden"><div style="position:absolute;top:0px;line-height:1;white-space:pre;font-size:11px;color:#000;left:1px;transform-origin:0 0;transform:scaleX(0.9284);">Yarı Mamul Stok Veri Grişi</div></div>
<div style="position:absolute;top:315px;line-height:1;white-space:pre;font-size:11px;color:#000;left:968px;transform-origin:0 0;transform:scaleX(0.8420);">ISKELET</div>
<div style="position:absolute;top:315px;line-height:1;white-space:pre;font-size:11px;color:#000;left:1087.8px;transform-origin:0 0;transform:scaleX(0.9309);">İskelet</div>
<div style="position:absolute;left:71px;top:330px;width:1135px;height:20px;background:#f5f9ff;border-bottom:1px solid #e6edf8"></div>
<div class="ind" style="top:330px;height:20px"></div>
<div style="position:absolute;left:111px;top:330px;width:1px;height:20px;background:#dfe8f6"></div>
<div style="position:absolute;left:244px;top:330px;width:1px;height:20px;background:#dfe8f6"></div>
<div style="position:absolute;left:297px;top:330px;width:1px;height:20px;background:#dfe8f6"></div>
<div style="position:absolute;left:481px;top:330px;width:1px;height:20px;background:#dfe8f6"></div>
<div style="position:absolute;left:619px;top:330px;width:1px;height:20px;background:#dfe8f6"></div>
<div style="position:absolute;left:655px;top:330px;width:1px;height:20px;background:#dfe8f6"></div>
<div style="position:absolute;left:693px;top:330px;width:1px;height:20px;background:#dfe8f6"></div>
<div style="position:absolute;left:750px;top:330px;width:1px;height:20px;background:#dfe8f6"></div>
<div style="position:absolute;left:840px;top:330px;width:1px;height:20px;background:#dfe8f6"></div>
<div style="position:absolute;left:965px;top:330px;width:1px;height:20px;background:#dfe8f6"></div>
<div style="position:absolute;left:1085px;top:330px;width:1px;height:20px;background:#dfe8f6"></div>
<div style="position:absolute;left:1206px;top:330px;width:1px;height:20px;background:#dfe8f6"></div>
<div style="position:absolute;top:335px;line-height:1;white-space:pre;font-size:11px;color:#000;right:1249.25px;transform-origin:100% 0;transform:scaleX(0.9388);">60</div>
<div style="position:absolute;top:335px;line-height:1;white-space:pre;font-size:11px;color:#000;left:113.75px;transform-origin:0 0;transform:scaleX(0.8778);">KANEPE KASASI</div>
<div style="position:absolute;top:335px;line-height:1;white-space:pre;font-size:11px;color:#000;right:1063px;transform-origin:100% 0;transform:scaleX(0.9532);">140</div>
<div style="position:absolute;top:335px;line-height:1;white-space:pre;font-size:11px;color:#000;left:300px;transform-origin:0 0;transform:scaleX(0.8862);">YM-POLO 3&#x27;LÜ KANEPE KASASI</div>
<div style="position:absolute;left:482px;top:335px;width:135px;height:14px;overflow:hidden"><div style="position:absolute;top:0px;line-height:1;white-space:pre;font-size:11px;color:#000;left:0.75px;transform-origin:0 0;transform:scaleX(0.8780);">KANEPE KASASI V1 Varyantı</div></div>
<div style="position:absolute;top:335px;line-height:1;white-space:pre;font-size:11px;color:#000;right:706.5px;transform-origin:100% 0;transform:scaleX(0.8163);">1</div>
<div style="position:absolute;top:335px;line-height:1;white-space:pre;font-size:11px;color:#000;left:657px;transform-origin:0 0;transform:scaleX(1.0159);">Adet</div>
<div class="cb" style="left:716px;top:334px"></div>
<svg style="position:absolute;left:716px;top:334px" width="12" height="12" viewBox="0 0 12 12"><path d="M2.8 5.6 L5.2 8.6 L9.2 2.6" fill="none" stroke="#4a6a9c" stroke-width="2"/></svg>
<div style="position:absolute;left:842px;top:335px;width:122px;height:14px;overflow:hidden"><div style="position:absolute;top:0px;line-height:1;white-space:pre;font-size:11px;color:#000;left:1px;transform-origin:0 0;transform:scaleX(0.9284);">Yarı Mamul Stok Veri Grişi</div></div>
<div style="position:absolute;top:335px;line-height:1;white-space:pre;font-size:11px;color:#000;left:968px;transform-origin:0 0;transform:scaleX(0.8651);">KASA</div>
<div style="position:absolute;top:335px;line-height:1;white-space:pre;font-size:11px;color:#000;left:1087.8px;transform-origin:0 0;transform:scaleX(0.9291);">Kasa</div>
<div style="position:absolute;left:71px;top:230px;width:1135px;height:19px;border-top:1px dotted #d9a24a;border-bottom:1px dotted #d9a24a"></div>
<svg style="position:absolute;left:44px;top:234px" width="8" height="11" viewBox="0 0 8 11"><path d="M1.8 1.4 L5.6 5.3 L1.8 9.2" fill="none" stroke="#6c9be6" stroke-width="1.9"/></svg>
<div style="position:absolute;left:750px;top:230px;width:91px;height:19px;background:#f6fbf4;border-top:1px dotted #222"></div>
<div style="position:absolute;top:235px;line-height:1;white-space:pre;font-size:11px;color:#000;left:752.5px;transform-origin:0 0;transform:scaleX(1.0317);">A;B;Ü;İ;X;x</div>
<svg style="position:absolute;left:826px;top:237px" width="9" height="6" viewBox="0 0 9 6"><path d="M1.8 1.2 L7.4 1.2 L4.6 4.4Z" fill="#5f7fb6"/></svg>
<div style="position:absolute;left:752px;top:249px;width:154px;height:210px;border:1px solid #b4c5e0;background:#f6fbf4"></div>
<div class="cb" style="left:756px;top:253px"></div>
<svg style="position:absolute;left:756px;top:253px" width="12" height="12" viewBox="0 0 12 12"><path d="M2.8 5.6 L5.2 8.6 L9.2 2.6" fill="none" stroke="#4a6a9c" stroke-width="2"/></svg>
<div style="position:absolute;top:253px;line-height:1;white-space:pre;font-size:11px;color:#000;left:773px;transform-origin:0 0;transform:scaleX(0.9316);">Alış Satış Detayı</div>
<div class="cb" style="left:756px;top:270px"></div>
<div style="position:absolute;top:270px;line-height:1;white-space:pre;font-size:11px;color:#000;left:773px;transform-origin:0 0;transform:scaleX(0.9350);">Alış Satış Parametresi</div>
<div class="cb" style="left:756px;top:287px"></div>
<div style="position:absolute;top:287px;line-height:1;white-space:pre;font-size:11px;color:#000;left:773px;transform-origin:0 0;transform:scaleX(0.9564);">Stok İşlem Parametresi</div>
<div class="cb" style="left:756px;top:304px"></div>
<svg style="position:absolute;left:756px;top:304px" width="12" height="12" viewBox="0 0 12 12"><path d="M2.8 5.6 L5.2 8.6 L9.2 2.6" fill="none" stroke="#4a6a9c" stroke-width="2"/></svg>
<div style="position:absolute;top:304px;line-height:1;white-space:pre;font-size:11px;color:#000;left:773px;transform-origin:0 0;transform:scaleX(0.9357);">Stokkart Bilgisi</div>
<div class="cb" style="left:756px;top:321px"></div>
<div style="position:absolute;top:321px;line-height:1;white-space:pre;font-size:11px;color:#000;left:773px;transform-origin:0 0;transform:scaleX(0.9358);">Stoktipi Bilgisi</div>
<div class="cb" style="left:756px;top:338px"></div>
<div style="position:absolute;top:338px;line-height:1;white-space:pre;font-size:11px;color:#000;left:773px;transform-origin:0 0;transform:scaleX(0.9423);">Reçete Satırı</div>
<div class="cb" style="left:756px;top:355px"></div>
<div style="position:absolute;top:355px;line-height:1;white-space:pre;font-size:11px;color:#000;left:773px;transform-origin:0 0;transform:scaleX(0.9662);">Reçete Parametre</div>
<div class="cb" style="left:756px;top:372px"></div>
<svg style="position:absolute;left:756px;top:372px" width="12" height="12" viewBox="0 0 12 12"><path d="M2.8 5.6 L5.2 8.6 L9.2 2.6" fill="none" stroke="#4a6a9c" stroke-width="2"/></svg>
<div style="position:absolute;top:372px;line-height:1;white-space:pre;font-size:11px;color:#000;left:773px;transform-origin:0 0;transform:scaleX(0.9112);">Hızlı Üretim Sipariş Satırı</div>
<div class="cb" style="left:756px;top:389px"></div>
<div style="position:absolute;top:389px;line-height:1;white-space:pre;font-size:11px;color:#000;left:773px;transform-origin:0 0;transform:scaleX(0.9468);">Üretim Siparişi Parametresi</div>
<div class="cb" style="left:756px;top:406px"></div>
<svg style="position:absolute;left:756px;top:406px" width="12" height="12" viewBox="0 0 12 12"><path d="M2.8 5.6 L5.2 8.6 L9.2 2.6" fill="none" stroke="#4a6a9c" stroke-width="2"/></svg>
<div style="position:absolute;top:406px;line-height:1;white-space:pre;font-size:11px;color:#000;left:773px;transform-origin:0 0;transform:scaleX(0.9687);">Malzeme İhtiyaç</div>
<div class="cb" style="left:756px;top:423px"></div>
<div style="position:absolute;top:423px;line-height:1;white-space:pre;font-size:11px;color:#000;left:773px;transform-origin:0 0;transform:scaleX(0.9325);">MRP1 Parametre</div>
<div style="position:absolute;left:753px;top:436px;width:153px;height:17px;background:#316ac5;border-top:1px dotted #e0a040;border-left:1px dotted #e0a040"></div>
<div style="position:absolute;left:756px;top:434px;width:110px;height:2px;background:#ffff33"></div>
<div style="position:absolute;left:756px;top:436px;width:110px;height:17px;background:#37672f;border-top:1px dotted #b0a030"></div>
<div style="position:absolute;left:756px;top:439px;width:12px;height:12px;border:2px solid #f6f632;background:linear-gradient(135deg,#c9cc3a,#eeee3a)"></div>
<div style="position:absolute;top:440.5px;line-height:1;white-space:pre;font-size:11px;color:#e3ee34;left:773px;transform-origin:0 0;transform:scaleX(0.9325);">MRP2 Parametre</div>
<svg style="position:absolute;left:68px;top:123px" width="26" height="26" viewBox="0 0 26 26"><circle cx="13.299999999999997" cy="13.900000000000006" r="11.9" fill="#ff0000"/></svg>
<div style="position:absolute;top:128px;line-height:1;white-space:pre;font-size:17px;color:#fff;left:75.7px;transform-origin:0 0;transform:scaleX(1.0000);">1</div>
<svg style="position:absolute;left:727px;top:187px" width="26" height="26" viewBox="0 0 26 26"><circle cx="13.399999999999977" cy="13.900000000000006" r="11.9" fill="#ff0000"/></svg>
<div style="position:absolute;top:192px;line-height:1;white-space:pre;font-size:17px;color:#fff;left:735.5px;transform-origin:0 0;transform:scaleX(1.0000);">2</div>
<svg style="position:absolute;left:728px;top:426px" width="26" height="26" viewBox="0 0 26 26"><circle cx="13.200000000000045" cy="13.899999999999977" r="11.9" fill="#ff0000"/></svg>
<div style="position:absolute;top:431px;line-height:1;white-space:pre;font-size:17px;color:#fff;left:736.5px;transform-origin:0 0;transform:scaleX(1.0000);">3</div>
</body></html>
